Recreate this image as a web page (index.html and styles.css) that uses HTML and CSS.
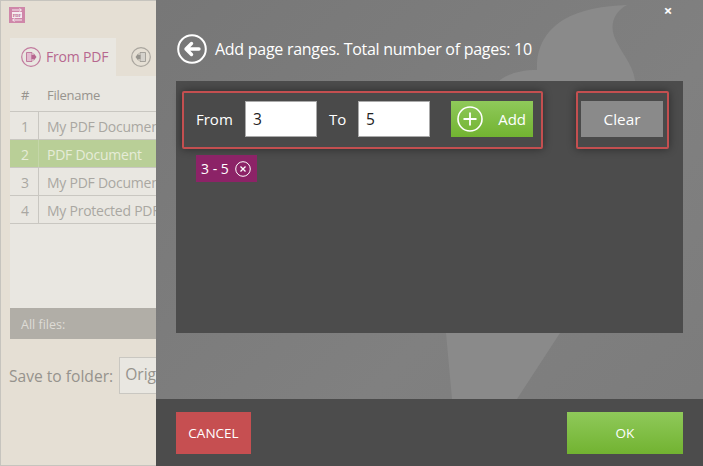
FILE: index.html
```html
<!DOCTYPE html>
<html lang="en">
<head>
<meta charset="utf-8">
<title>Add page ranges</title>
<link rel="stylesheet" href="styles.css">
</head>
<body>
<div class="app">
  <aside class="main">
    <svg class="logo" viewBox="0 0 16 16" width="16" height="16" aria-hidden="true">
      <rect width="16" height="16" fill="#cf87a9"/>
      <path d="M3 3H12M10.500 1.500L12.500 3L10.500 4.500M13 13H4M5.500 11.500L3.500 13L5.500 14.500" fill="none" stroke="#f6ecf0" stroke-width="1"/>
      <rect x="3" y="5" width="10" height="6" fill="#f6ecf0"/>
      <text class="logo-text" x="8" y="10">PDF</text>
    </svg>
    <div class="tabs">
      <div class="tab">
        <svg class="tab-icon" viewBox="0 0 20 20" width="20" height="20" aria-hidden="true">
          <circle cx="10" cy="10" r="9.300" fill="none" stroke="#c27c9f" stroke-width="1.200"/>
          <path d="M5.500 5.500H11V14.500H5.500Z" fill="#e2bdd0" stroke="#b7678f" stroke-width=".8"/>
          <path d="M10.500 8H12.500V6L15.500 10L12.500 14V12H10.500Z" fill="#b7678f"/>
        </svg>
        <span class="tab-label">From PDF</span>
      </div>
      <svg class="tab-icon off" viewBox="0 0 20 20" width="20" height="20" aria-hidden="true">
        <circle cx="10" cy="10" r="9.300" fill="none" stroke="#aaa69f" stroke-width="1.200"/>
        <path d="M9 5.500H14.500V14.500H9Z" fill="#d5d2cc" stroke="#97948e" stroke-width=".8"/>
        <path d="M9.500 8H7.500V6L4.500 10L7.500 14V12H9.500Z" fill="#97948e"/>
      </svg>
    </div>
    <div class="table">
      <div class="row head"><span class="num">#</span><span class="name">Filename</span></div>
      <div class="row"><span class="num">1</span><span class="name">My PDF Document</span></div>
      <div class="row selected"><span class="num">2</span><span class="name">PDF Document</span></div>
      <div class="row"><span class="num">3</span><span class="name">My PDF Document</span></div>
      <div class="row"><span class="num">4</span><span class="name">My Protected PDF</span></div>
      <div class="table-fill"></div>
      <div class="table-foot">All files:</div>
    </div>
    <div class="save">
      <span>Save to folder:</span>
      <span class="select">Original</span>
    </div>
  </aside>
  <section class="modal">
    <svg class="swoosh" viewBox="0 0 547 466" width="547" height="466" aria-hidden="true">
      <path d="M344 80C352 74 364 70 381 70C380 50 388 32 407 20C425 9 448 6 471 5C458 12 454 24 458 36C464 52 476 62 479 80L480 240L404 333L361 399H296L290 333Z" fill="#8a8a8a"/>
    </svg>
    <button class="close" type="button">×</button>
    <header class="title">
      <svg class="back" viewBox="0 0 30 30" width="30" height="30" aria-hidden="true">
        <circle cx="15" cy="15" r="13.800" fill="none" stroke="#fff" stroke-width="2"/>
        <path d="M9 15H22M14.500 9.500L9 15L14.500 20.500" fill="none" stroke="#fff" stroke-width="3.400" stroke-linecap="round" stroke-linejoin="round"/>
      </svg>
      <h1>Add page ranges. Total number of pages: 10</h1>
    </header>
    <div class="panel">
      <div class="controls">
        <div class="box range">
          <label class="lbl from">From</label>
          <input class="field" type="text" value="3">
          <label class="lbl to">To</label>
          <input class="field" type="text" value="5">
          <button class="btn add" type="button">
            <svg viewBox="0 0 26 26" width="26" height="26" aria-hidden="true">
              <circle cx="13" cy="13" r="12" fill="none" stroke="#fff" stroke-width="1.600"/>
              <path d="M13 6.500V19.500M6.500 13H19.500" stroke="#fff" stroke-width="1.800"/>
            </svg>
            <span>Add</span>
          </button>
        </div>
        <div class="box clear-box">
          <button class="btn clear" type="button">Clear</button>
        </div>
      </div>
      <div class="tags">
        <span class="tag">3 - 5
          <svg viewBox="0 0 16 16" width="16" height="16" aria-hidden="true">
            <circle cx="8" cy="8" r="7.300" fill="none" stroke="#fff" stroke-width="1"/>
            <path d="M5.500 5.500L10.500 10.500M10.500 5.500L5.500 10.500" stroke="#fff" stroke-width="1.300"/>
          </svg>
        </span>
      </div>
    </div>
    <footer class="foot">
      <button class="btn cancel" type="button">CANCEL</button>
      <button class="btn ok" type="button">OK</button>
    </footer>
  </section>
</div>
</body>
</html>
```
FILE: styles.css
```css
* { box-sizing: border-box; }
html, body { margin: 0; height: 100%; overflow: hidden; }
body { font-family: "Open Sans", "Noto Sans", sans-serif; }
.app { display: flex; width: 703px; height: 466px; }

.main {
  width: 156px;
  flex: none;
  overflow: hidden;
  background: #e5dfd4;
  border-top: 1px solid #c6c4be;
  border-left: 1px solid #c6c4be;
  border-bottom: 1px solid #c6c4be;
  padding: 6px 0 0 9px;
  color: #a9a7a2;
  font-size: 14px;
}
.logo { display: block; margin-left: -1px; }
.logo-text { font: 700 4.500px "Liberation Serif", serif; fill: #b7678f; text-anchor: middle; }
.tabs { display: flex; align-items: center; margin-top: 15px; height: 38px; width: 200px; }
.tab {
  display: flex; align-items: center; gap: 5px;
  width: 106px; height: 38px;
  padding-left: 11px;
  background: #e9e7e1;
  color: #b7678f;
  font-size: 14px;
  letter-spacing: -.2px;
}
.tab-label { padding-bottom: 2px; }
.tab-icon { flex: none; }
.tab-icon.off { margin-left: 15px; }

.table { width: 300px; height: 263px; background: #e9e7e1; display: flex; flex-direction: column; }
.row { display: flex; height: 28px; border-bottom: 1px solid #c9c7c1; align-items: center; white-space: nowrap; letter-spacing: -.25px; }
.row.head { height: 36px; color: #97948e; font-size: 13px; }
.row.selected { background: #b9cf97; color: #e6ecd8; }
.num { width: 29px; height: 100%; display: flex; align-items: center; padding: 2px 0 0 11px; border-right: 1px solid #c9c7c1; }
.head .num { border-right: 0; }
.selected .num { border-right-color: #c4d6a8; }
.name { padding: 2px 0 0 8px; }
.table-fill { flex: 1; }
.table-foot { height: 31px; background: #b1aea7; color: #dedcd6; font-size: 12.500px; padding: 8px 0 0 11px; }

.save { display: flex; align-items: center; gap: 6px; margin: 18px 0 0 -1px; width: 300px; color: #96938d; font-size: 15.600px; }
.select { width: 120px; height: 37px; background: #e9e7e1; border: 1px solid #c9c7c1; padding: 5px 0 0 5px; }

.modal {
  flex: 1; position: relative; overflow: hidden;
  display: flex; flex-direction: column;
  background: linear-gradient(135deg, #777 0%, #808080 60%, #7b7b7b 100%);
  padding: 0;
}
.swoosh { position: absolute; left: 0; top: 0; }
.close {
  position: absolute; top: 0; right: 27px;
  width: 16px; height: 20px; padding: 0; border: 0; background: none;
  color: #fff; font: 700 15px/20px "Open Sans", sans-serif;
}
.title { position: relative; display: flex; align-items: center; gap: 8px; height: 81px; padding: 16px 0 0 21px; }
.back { flex: none; }
.title h1 { margin: 0; font-size: 16px; letter-spacing: -.27px; font-weight: 400; color: #fff; }

.panel { position: relative; width: 507px; height: 252px; margin-left: 20px; background: #4c4c4c; padding: 10px 0 0 6px; }
.controls { display: flex; gap: 33px; }
.box {
  height: 58px;
  border: 2px solid #c44f50;
  border-radius: 2px;
  box-shadow: 0 0 9px rgba(0, 0, 0, .45);
  background: #4a4a4a;
  display: flex; align-items: center;
  padding-bottom: 2px;
}
.range { width: 361px; padding-left: 12px; }
.clear-box { width: 93px; padding-left: 3px; }
.lbl { color: #fff; font-size: 15px; }
.lbl.from { width: 49px; }
.lbl.to { width: 41px; padding-left: 12px; }
.field {
  width: 72px; height: 36px; padding: 0 7px;
  border: 1px solid #aaa; background: #fff; color: #222;
  font: 15.500px "Open Sans", sans-serif; outline: 0;
}
.btn { border: 0; padding: 0; color: #fff; font-family: "Open Sans", sans-serif; cursor: pointer; }
.add {
  width: 82px; height: 36px; margin-left: 21px;
  display: flex; align-items: center; justify-content: space-between;
  padding: 0 7px 0 6px;
  background: linear-gradient(#8fc95a, #72b331);
  font-size: 15px;
}
.clear { width: 82px; height: 36px; background: #8a8a8a; font-size: 15.300px; }
.tags { padding: 6px 0 0 14px; }
.tag {
  display: inline-flex; align-items: center; gap: 6px;
  width: 61px; height: 27px; padding-left: 5px;
  background: #8c2367; color: #fff; font-size: 14px;
}

.foot {
  position: relative; margin-top: auto; height: 67px;
  background: #4c4c4c;
  display: flex; justify-content: space-between;
  padding: 13px 20px 0;
}
.cancel { width: 75px; height: 42px; background: #c64f51; font-size: 13.500px; }
.ok { width: 116px; height: 42px; background: linear-gradient(#8fc95a, #72b331); font-size: 13.500px; }
```
